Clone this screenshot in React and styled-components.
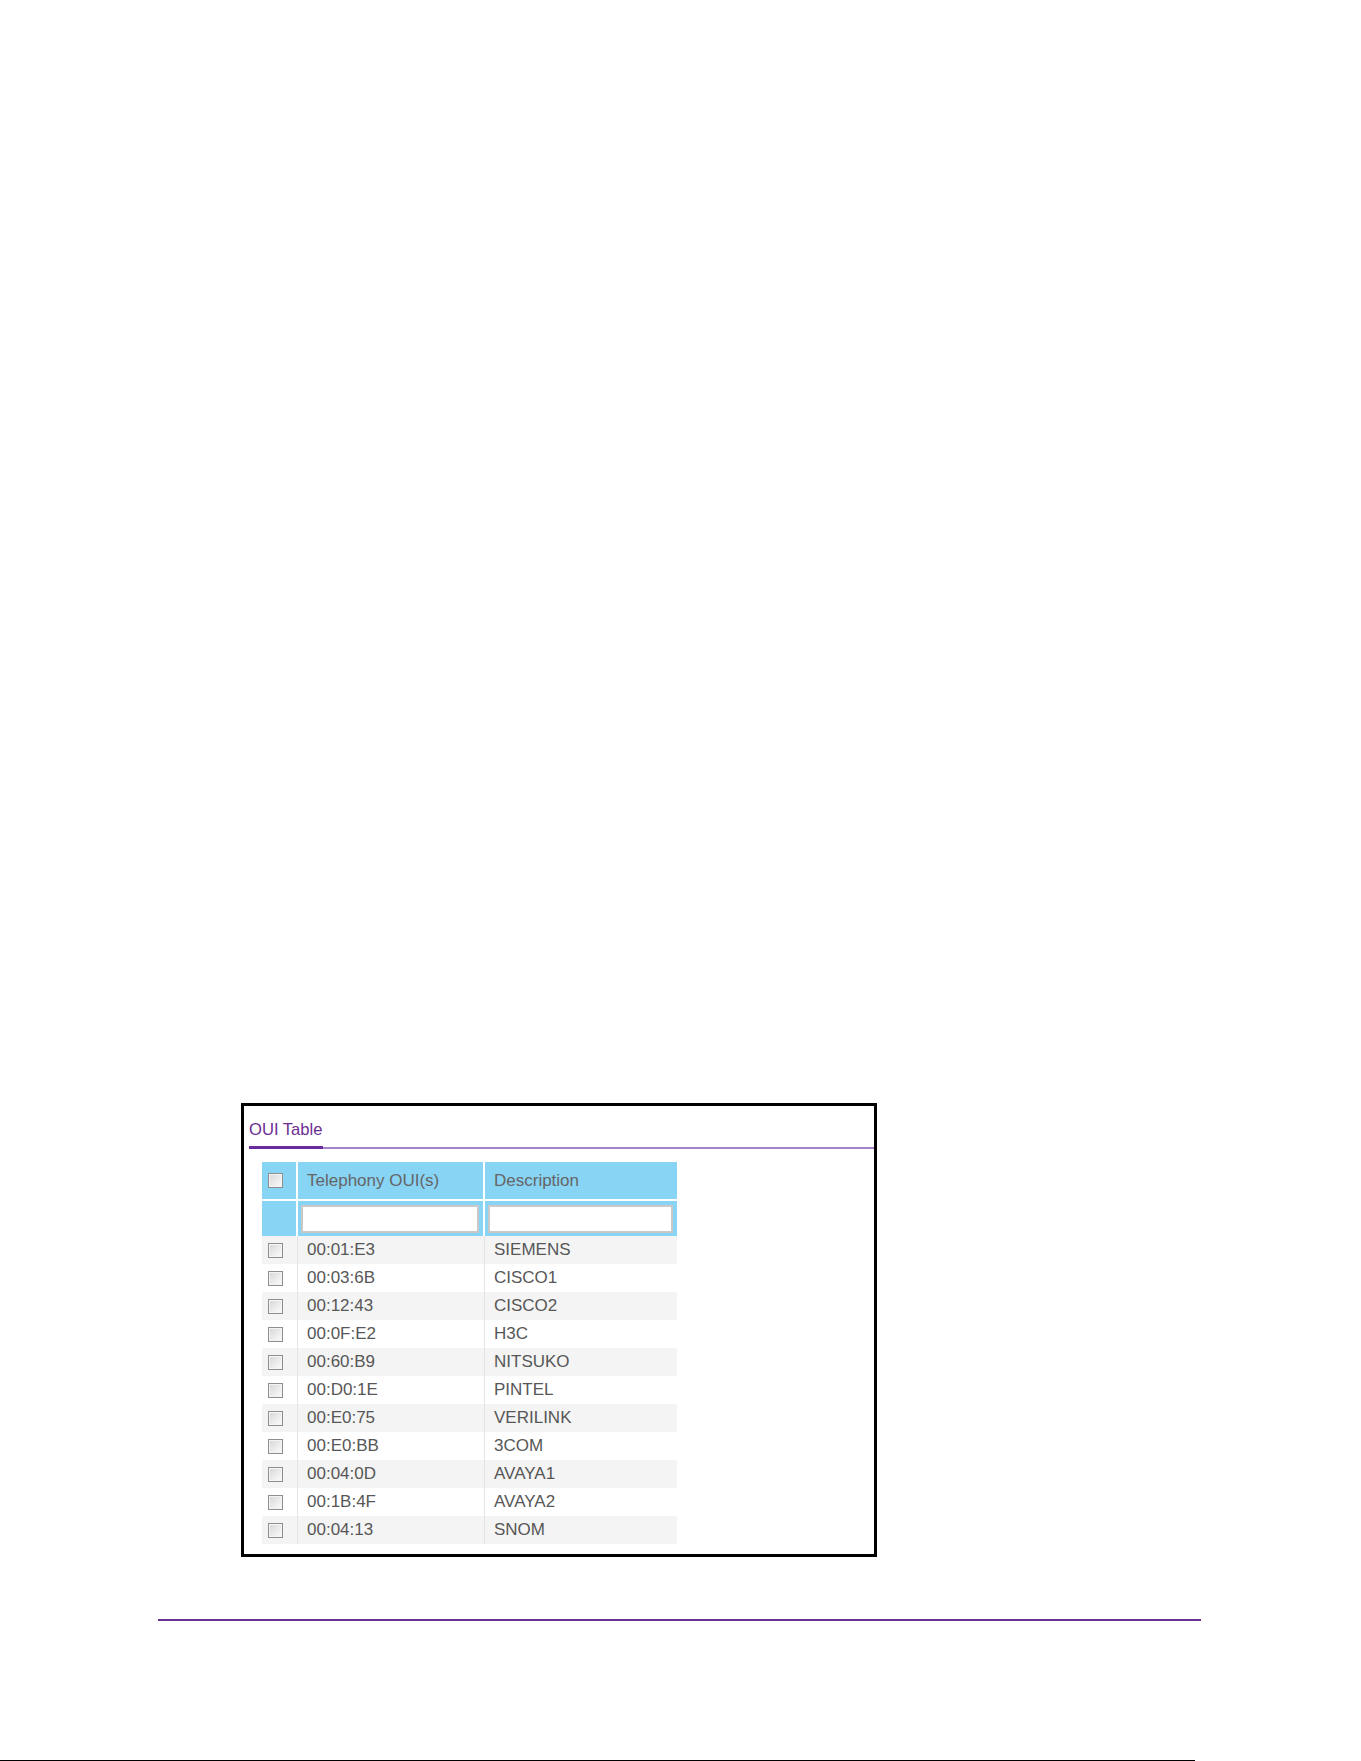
import React from "react";
import styled, { createGlobalStyle } from "styled-components";

const Global = createGlobalStyle`
  html, body { margin: 0; padding: 0; background: #ffffff; }
  body { font-family: "Liberation Sans", Arial, sans-serif; }
`;

const Page = styled.div`
  width: 1361px;
  height: 1761px;
  display: flex;
  flex-direction: column;
  overflow: hidden;
`;

const Figure = styled.div`
  margin: 1103px 0 0 241px;
  width: 636px;
  height: 454px;
  box-sizing: border-box;
  border: 3px solid #000;
  background: #fff;
  display: flex;
  flex-direction: column;
`;

const TabBar = styled.div`
  display: flex;
  margin: 0 0 0 5px;
  border-bottom: 2px solid #a683c6;
`;

const Tab = styled.div`
  padding: 15px 1px 7px 0;
  margin-bottom: -2px;
  font-size: 16.6px;
  line-height: 18px;
  color: #6b2d92;
  border-bottom: 3px solid #6a2c9c;
`;

const Table = styled.table`
  margin: 13px 0 0 18px;
  border-collapse: separate;
  border-spacing: 0;
  width: 415px;
  table-layout: fixed;
  font-family: "Liberation Sans", Arial, sans-serif;
`;

const HeadCell = styled.th`
  background: #88d4f5;
  height: ${(p) => p.$h}px;
  padding: 0 0 0 ${(p) => p.$pl}px;
  text-align: left;
  font-weight: normal;
  font-size: 17px;
  color: #656565;
  border-right: ${(p) => (p.$last ? "0" : "2px solid #fff")};
  border-bottom: ${(p) => (p.$gap ? "2px solid #fff" : "0")};
  vertical-align: middle;
  box-sizing: border-box;
`;

const Cell = styled.td`
  height: 28px;
  padding: 0 0 0 ${(p) => p.$pl}px;
  font-size: 17px;
  color: #575757;
  background: ${(p) => (p.$odd ? "#f4f4f4" : "#ffffff")};
  border-right: ${(p) => (p.$last ? "0" : "1px solid #e4e4e4")};
  vertical-align: middle;
  white-space: nowrap;
  box-sizing: border-box;
`;

const Check = styled.span`
  display: block;
  width: 13px;
  height: 13px;
  border: 1px solid #8e8e8e;
  background: linear-gradient(135deg, #d6d6d6 0%, #ececec 55%, #fbfbfb 100%);
  box-shadow: inset 0 0 0 1px #f4f4f4;
`;

const FilterInput = styled.input`
  display: block;
  box-sizing: border-box;
  width: calc(100% - 7px);
  height: 28px;
  margin: 0 0 0 3px;
  border: 2px solid #c9c9c9;
  background: #fff;
  outline: none;
`;

const FooterRule = styled.div`
  margin: 62px 0 0 158px;
  width: 1043px;
  height: 2px;
  background: #6b2f98;
`;

const BottomRule = styled.div`
  margin: 139px 0 0 0;
  width: 1195px;
  height: 1px;
  background: #000;
`;

const rows = [
  ["00:01:E3", "SIEMENS"],
  ["00:03:6B", "CISCO1"],
  ["00:12:43", "CISCO2"],
  ["00:0F:E2", "H3C"],
  ["00:60:B9", "NITSUKO"],
  ["00:D0:1E", "PINTEL"],
  ["00:E0:75", "VERILINK"],
  ["00:E0:BB", "3COM"],
  ["00:04:0D", "AVAYA1"],
  ["00:1B:4F", "AVAYA2"],
  ["00:04:13", "SNOM"],
];

export default function App() {
  return (
    <Page>
      <Global />
      <Figure>
        <TabBar>
          <Tab>OUI Table</Tab>
        </TabBar>
        <Table>
          <colgroup>
            <col style={{ width: 36 }} />
            <col style={{ width: 187 }} />
            <col style={{ width: 192 }} />
          </colgroup>
          <thead>
            <tr>
              <HeadCell $h={39} $pl={6} $gap>
                <Check />
              </HeadCell>
              <HeadCell $h={39} $pl={9} $gap>
                Telephony OUI(s)
              </HeadCell>
              <HeadCell $h={39} $pl={9} $gap $last>
                Description
              </HeadCell>
            </tr>
            <tr>
              <HeadCell $h={35} $pl={0} />
              <HeadCell $h={35} $pl={0}>
                <FilterInput type="text" />
              </HeadCell>
              <HeadCell $h={35} $pl={0} $last>
                <FilterInput type="text" />
              </HeadCell>
            </tr>
          </thead>
          <tbody>
            {rows.map(([oui, desc], i) => (
              <tr key={oui}>
                <Cell $pl={6} $odd={i % 2 === 0}>
                  <Check />
                </Cell>
                <Cell $pl={9} $odd={i % 2 === 0}>
                  {oui}
                </Cell>
                <Cell $pl={9} $odd={i % 2 === 0} $last>
                  {desc}
                </Cell>
              </tr>
            ))}
          </tbody>
        </Table>
      </Figure>
      <FooterRule />
      <BottomRule />
    </Page>
  );
}
